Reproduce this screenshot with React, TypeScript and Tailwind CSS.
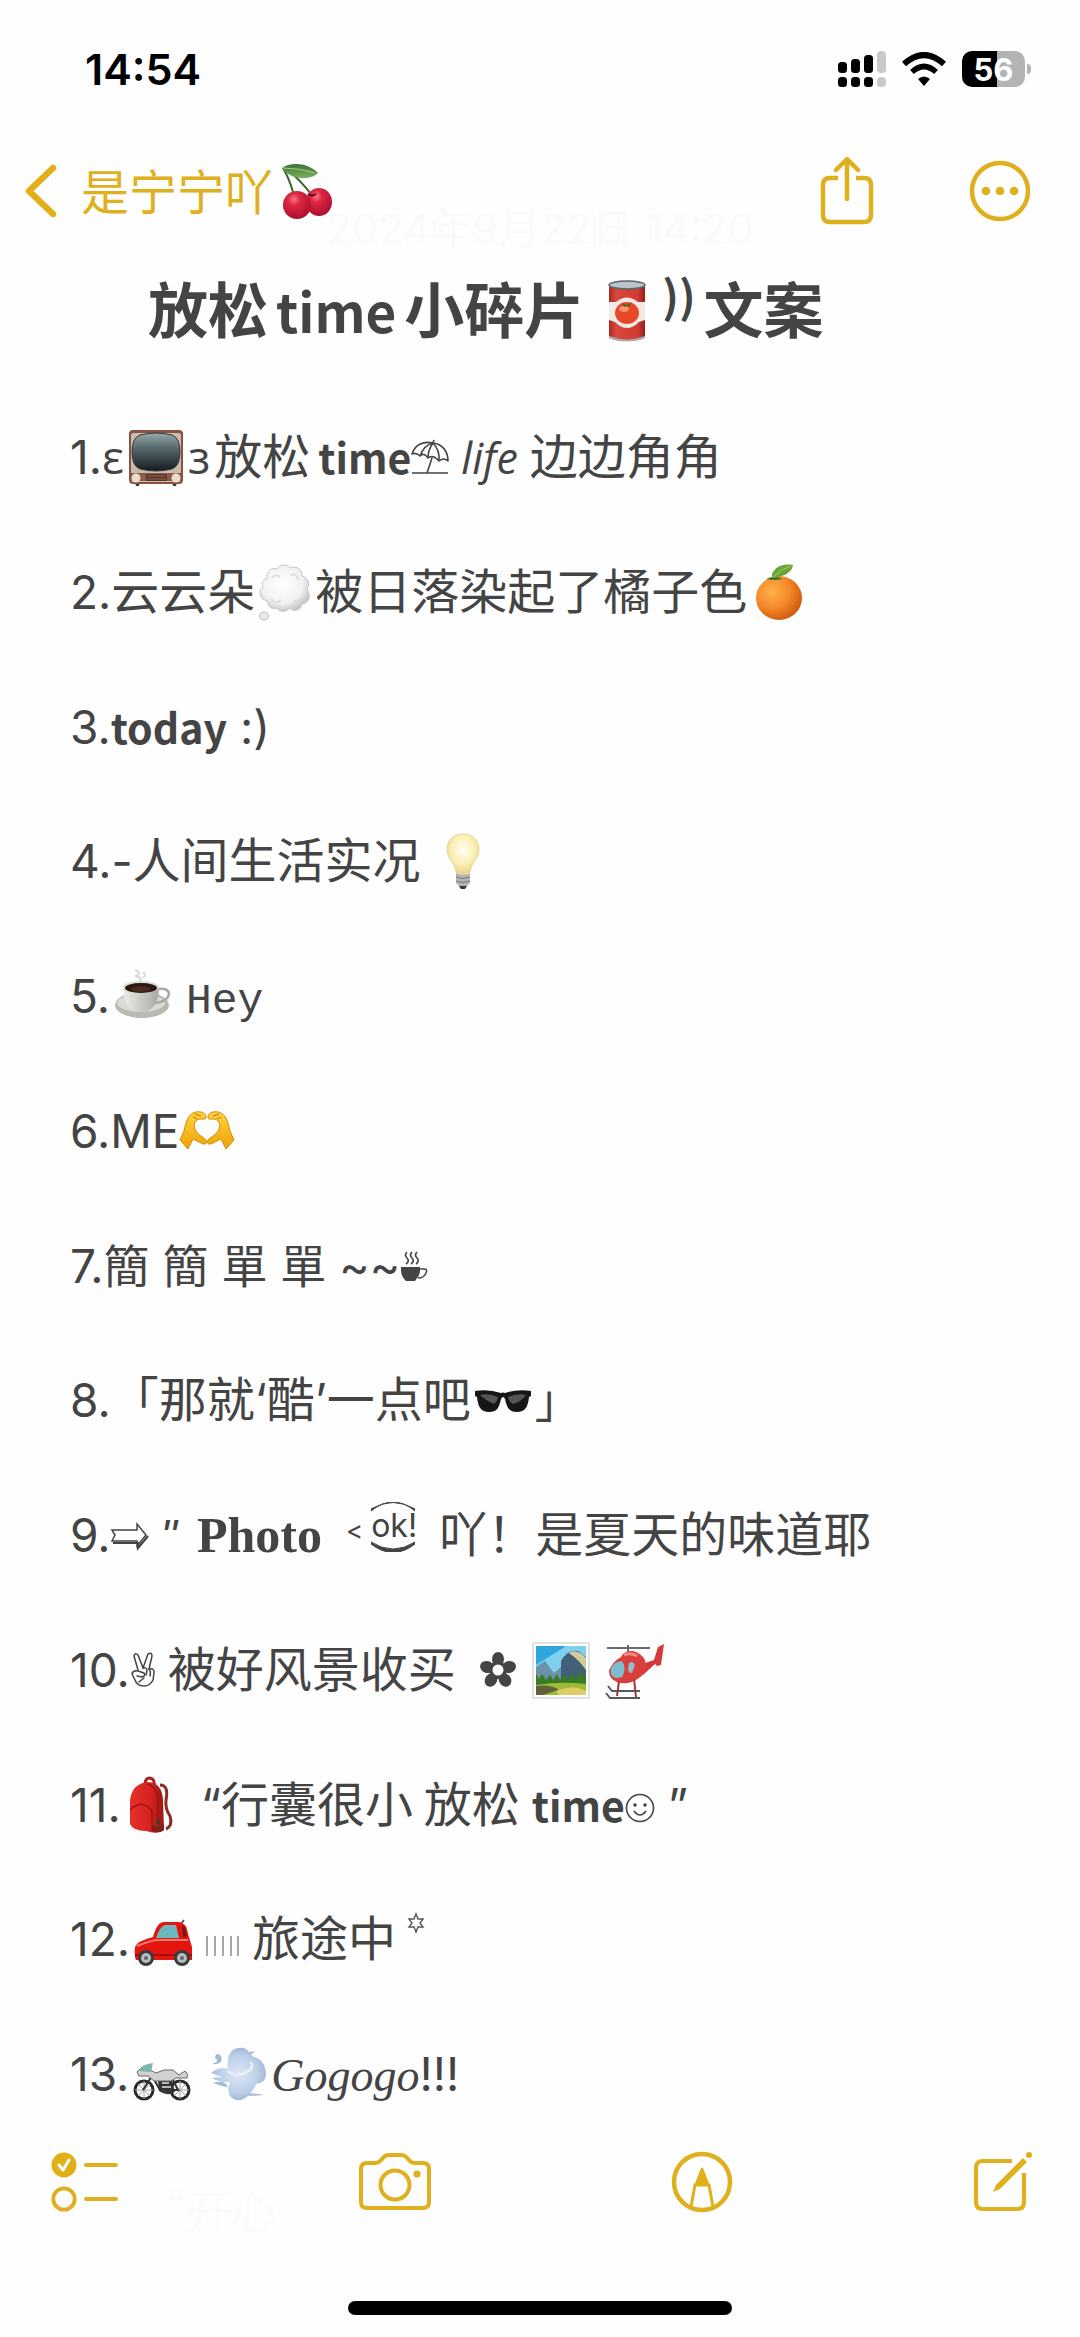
import type { ReactNode } from "react";

/* ---------- Drawing helper ---------- */

type DrawProps = { w: number; label: string; className?: string; children: ReactNode };

// Every inline drawing shares one 56px tall box that hangs 12px under the baseline
function Draw({ w, label, className = "", children }: DrawProps) {
  return (
    <svg
      role="img"
      aria-label={label}
      width={w}
      height="56"
      viewBox={`0 0 ${w} 56`}
      fill="none"
      className={`inline-block overflow-visible align-[-12px] ${className}`}
    >
      {children}
    </svg>
  );
}

/* ---------- Emoji ---------- */

function Cherries() {
  return (
    <svg role="img" aria-label="cherries" width="52" height="56" viewBox="0 0 52 56" fill="none">
      <defs>
        <radialGradient id="cherry" cx="0.4" cy="0.3" r="0.75">
          <stop offset="0" stopColor="#f8788a" />
          <stop offset="0.3" stopColor="#dc2741" />
          <stop offset="1" stopColor="#a80d2c" />
        </radialGradient>
        <linearGradient id="leaf" x1="0" y1="0" x2="0" y2="1">
          <stop offset="0" stopColor="#3d7034" />
          <stop offset="1" stopColor="#79b25e" />
        </linearGradient>
      </defs>
      <path d="M2 5Q8 15 12 29M8 8Q20 18 30 31" stroke="#42632c" strokeWidth="2" />
      <path d="M1 5C9-1 27-1 37 10C29 18 9 17 1 5Z" fill="url(#leaf)" />
      <path d="M2 5Q18 5 34 10" stroke="#a6cd8b" strokeWidth="1" />
      <ellipse cx="38" cy="39" rx="13" ry="14" fill="url(#cherry)" />
      <ellipse cx="16" cy="42" rx="14" ry="14" fill="url(#cherry)" />
      <path d="M27 31Q31 34 35 31" stroke="#5d0717" strokeWidth="2" />
    </svg>
  );
}

function TomatoCan() {
  return (
    <svg
      role="img"
      aria-label="canned food"
      width="38"
      height="62"
      viewBox="0 0 38 62"
      fill="none"
      className="ml-6 mr-4 inline-block align-[-9px]"
    >
      <defs>
        <linearGradient id="can">
          <stop offset="0" stopColor="#a92a23" />
          <stop offset="0.2" stopColor="#d9483d" />
          <stop offset="0.8" stopColor="#d03a30" />
          <stop offset="1" stopColor="#962019" />
        </linearGradient>
      </defs>
      <path d="M1 5V56Q2 61 19 61Q36 61 37 56V5Z" fill="url(#can)" />
      <path d="M1 22L8 22Q19 13 30 22L37 22V40L31 42Q19 54 7 42L1 40Z" fill="#f0e9e4" />
      <ellipse cx="19" cy="33" rx="12" ry="11" fill="#e8482a" />
      <ellipse cx="16" cy="29" rx="5" ry="3" fill="#ff9270" />
      <path d="M14 23l5 2 5-3-3 5-2-1-3 1Z" fill="#486a20" />
      <path d="M1 57Q19 64 37 57" stroke="#a9adb0" strokeWidth="2" />
      <ellipse cx="19" cy="5" rx="18" ry="4" fill="#b7c6cd" stroke="#5b6669" strokeWidth="1.5" />
    </svg>
  );
}

function Television() {
  return (
    <Draw w={56} label="television" className="mx-1">
      <defs>
        <linearGradient id="tv" x1="0" y1="0" x2="0" y2="1">
          <stop offset="0" stopColor="#93aaab" />
          <stop offset="0.4" stopColor="#57696b" />
          <stop offset="1" stopColor="#171c1f" />
        </linearGradient>
      </defs>
      <path d="M7 52h5l-1 4H8ZM44 52h5l-1 4h-3Z" fill="#50352a" />
      <rect x="1" y="0" width="54" height="54" rx="4" fill="#8a5241" />
      <rect x="3" y="3" width="50" height="49" rx="2" fill="#c9bcab" />
      <path d="M3 43H53V51H3Z" fill="#8d5a49" />
      <path d="M12 5Q28 1 44 5Q52 8 52 22Q52 36 44 39Q28 43 12 39Q4 36 4 22Q4 8 12 5Z" fill="url(#tv)" stroke="#30393b" strokeWidth="1" />
      <rect x="18" y="44" width="21" height="7" rx="1" fill="#5a352a" />
      <path d="M19 46h19M19 49h19" stroke="#946754" strokeWidth="1" />
      <circle cx="8" cy="48" r="4.5" fill="#e9decb" />
      <circle cx="48" cy="48" r="4.5" fill="#e9decb" />
    </Draw>
  );
}

function ThoughtCloud() {
  return (
    <Draw w={52} label="thought" className="mx-1">
      <defs>
        <radialGradient id="cloud" cx="0.45" cy="0.4" r="0.6">
          <stop offset="0" stopColor="#ffffff" />
          <stop offset="0.7" stopColor="#f1f1f2" />
          <stop offset="1" stopColor="#c9c9cc" />
        </radialGradient>
      </defs>
      <path
        d="M8 14C7 6 13 2 18 4C21-1 29-1 31 3C38 0 44 5 43 11C50 13 51 20 48 24C53 31 49 39 43 39C42 46 34 47 31 43C26 48 20 47 18 43C11 45 8 40 9 36C0 35-1 25 4 22C2 18 4 14 8 14Z"
        fill="url(#cloud)"
        stroke="#c6c6c9"
        strokeWidth="1"
      />
      <path d="M13 13Q17 8 21 12M32 10Q38 8 39 15M12 34Q17 40 22 35M35 36Q42 37 43 30" stroke="#dededf" strokeWidth="2" />
      <ellipse cx="5" cy="51" rx="4.5" ry="4" fill="#e9e9ea" stroke="#bbbbbe" strokeWidth="1" />
    </Draw>
  );
}

function Tangerine() {
  return (
    <Draw w={48} label="tangerine" className="ml-2">
      <defs>
        <radialGradient id="orange" cx="0.35" cy="0.35" r="0.75">
          <stop offset="0" stopColor="#ffb14a" />
          <stop offset="0.5" stopColor="#f5892a" />
          <stop offset="1" stopColor="#c95207" />
        </radialGradient>
      </defs>
      <ellipse cx="24" cy="33" rx="23" ry="22" fill="url(#orange)" />
      <path d="M11 14l6-2 1-6 4 6 6 2-8 1Z" fill="#3e6d22" />
      <path d="M17 13C17 3 26-2 38 0C37 8 28 12 17 13Z" fill="#6ba63a" />
      <path d="M18 12Q26 4 36 1" stroke="#a6cf69" strokeWidth="1" />
    </Draw>
  );
}

function Bulb() {
  return (
    <Draw w={34} label="light bulb" className="ml-3">
      <defs>
        <radialGradient id="bulb" cx="0.5" cy="0.4" r="0.6">
          <stop offset="0" stopColor="#fffef2" />
          <stop offset="0.6" stopColor="#fbf0b6" />
          <stop offset="1" stopColor="#e9d489" />
        </radialGradient>
      </defs>
      <path d="M17 0C7 0 1 7 1 15C1 25 9 28 10 38Q17 42 24 38C25 28 33 25 33 15C33 7 27 0 17 0Z" fill="url(#bulb)" stroke="#e6d796" strokeWidth="1" />
      <path d="M10 39Q17 42 24 39V49L20 53H14L10 49Z" fill="#b4b4b0" />
      <path d="M10 43Q17 46 24 43M10 47Q17 50 24 47" stroke="#77777a" strokeWidth="1" />
      <path d="M13 52h8l-2 3h-4Z" fill="#353535" />
    </Draw>
  );
}

function Coffee() {
  return (
    <Draw w={56} label="coffee" className="ml-1">
      <defs>
        <linearGradient id="cup">
          <stop offset="0" stopColor="#eeeee9" />
          <stop offset="1" stopColor="#a9a9a2" />
        </linearGradient>
      </defs>
      <path d="M21 1q8 3 1 6q8 3 3 5M29 3q4 3 0 6" stroke="#d9d9d9" strokeWidth="2" />
      <ellipse cx="28" cy="36" rx="27" ry="13" fill="#b9b9b2" />
      <ellipse cx="27" cy="34" rx="24" ry="9" fill="#dadad4" />
      <path d="M44 20q11-1 11 5q-1 7-13 9" stroke="#a9a9a6" strokeWidth="2.5" />
      <path d="M9 18C9 34 16 43 27 43C39 43 45 34 45 18Z" fill="url(#cup)" />
      <ellipse cx="27" cy="18" rx="18" ry="6" fill="#dedcd6" />
      <ellipse cx="27" cy="19" rx="16" ry="5" fill="#2c1712" />
      <ellipse cx="27" cy="20" rx="10" ry="3" fill="#4a2a20" />
    </Draw>
  );
}

function HeartHands() {
  return (
    <Draw w={56} label="heart hands">
      <defs>
        <linearGradient id="hand" x1="0" y1="0" x2="0" y2="1">
          <stop offset="0" stopColor="#ffd23c" />
          <stop offset="1" stopColor="#eda306" />
        </linearGradient>
      </defs>
      <g fill="url(#hand)" stroke="#d18c0a" strokeWidth="1" strokeLinejoin="round">
        <path d="M1 36L5 27C7 17 10 9 17 8C22 7 27 9 27 13C27 16 24 15 22 15C16 15 14 20 16 25C18 31 25 33 27 36C29 40 26 41 22 39L14 35L9 45Z" />
        <path d="M55 36L51 27C49 17 46 9 39 8C34 7 29 9 29 13C29 16 32 15 34 15C40 15 42 20 40 25C38 31 31 33 29 36C27 40 30 41 34 39L42 35L47 45Z" />
      </g>
      <path d="M16 10l6 2M14 13l4 2M40 10l-6 2M42 13l-4 2" stroke="#bd7804" strokeWidth="1" />
    </Draw>
  );
}

function Sunglasses() {
  return (
    <Draw w={56} label="sunglasses" className="mx-1">
      <path d="M0 18Q14 16 26 20Q28 19 30 20Q42 16 56 18V23L54 24C53 34 50 39 42 39C34 39 32 35 30 26Q28 22 26 26C24 35 22 39 14 39C6 39 3 34 2 24L0 23Z" fill="#161616" />
      <path d="M5 22Q14 20 23 24Q22 29 19 31Q10 27 5 22ZM33 24Q42 20 51 22Q46 29 38 31Q34 29 33 24Z" fill="#555" />
    </Draw>
  );
}

function Landscape() {
  return (
    <Draw w={58} label="national park" className="ml-4">
      <rect x="1" y="0" width="56" height="55" fill="#fff" stroke="#d3d9d9" strokeWidth="1.5" />
      <rect x="4" y="3" width="50" height="49" fill="#7fd0ef" />
      <path d="M4 3h30L4 22Z" fill="#2fa5de" />
      <path d="M4 24l9-6 9 12 8-7V40H4Z" fill="#6b93a8" />
      <path d="M29 42V18Q36 6 46 8L54 14V42Z" fill="#426178" />
      <path d="M37 10Q45 5 54 15V27Q47 17 37 10Z" fill="#d4cb9b" />
      <path d="M4 31l3 5 3-5 4 6 4-5 3 5 4-6 3 6 4-5 4 5 4-7 4 6 5-8 5 6v14H4Z" fill="#397a26" />
      <path d="M4 42Q30 38 54 41V52H4Z" fill="#9dba37" />
      <path d="M4 43Q19 41 27 47Q16 50 11 52H4Z" fill="#62603b" />
      <path d="M24 48Q42 41 54 48V52H27Z" fill="#dfcc67" />
    </Draw>
  );
}

function Helicopter() {
  return (
    <Draw w={58} label="helicopter" className="ml-4">
      <path d="M33 22L48 17L52 4L58 1L55 22L51 23L49 21L37 32Z" fill="#d33b38" />
      <path d="M1 5h43M22 2v8" stroke="#656b6e" strokeWidth="2" />
      <path d="M15 14Q18 7 27 8Q35 10 39 17Q42 29 33 35Q22 43 11 39Q3 36 3 28Q6 19 15 14Z" fill="#d93f3d" />
      <path d="M18 12Q24 9 31 13" stroke="#f28b83" strokeWidth="3" />
      <path d="M5 25Q9 18 16 18Q21 25 16 34Q8 37 5 31Z" fill="#7ebdce" />
      <path d="M23 20q4-3 6 2l-3 8q-6 0-3-10Z" fill="#91bccb" />
      <path d="M13 38l-2 15M28 36l2 18" stroke="#b52f31" strokeWidth="2" />
      <path d="M2 43l4 5h28M0 50l4 5h30" stroke="#545b60" strokeWidth="2" />
    </Draw>
  );
}

function Backpack() {
  return (
    <Draw w={44} label="backpack" className="ml-2">
      <defs>
        <linearGradient id="bag">
          <stop offset="0" stopColor="#e6302c" />
          <stop offset="0.6" stopColor="#d6231f" />
          <stop offset="1" stopColor="#971712" />
        </linearGradient>
      </defs>
      <path d="M31 7Q40 7 37 22Q36 31 41 38Q44 48 37 51" stroke="#8e2b21" strokeWidth="3" />
      <path d="M16 6Q16 0 21 0Q26 1 25 7" stroke="#a9221c" strokeWidth="3" />
      <path d="M1 22Q3 6 18 4Q33 4 34 22L35 52Q29 57 17 53Q4 53 1 46Z" fill="url(#bag)" />
      <path d="M1 32Q13 20 23 33V53M19 6Q30 10 29 27V44" stroke="#9f1512" strokeWidth="1.5" />
      <path d="M23 47q7 4 12-1v6q-5 4-12 1Z" fill="#7d2219" />
      <path d="M29 41v6" stroke="#4a3a2c" strokeWidth="3" />
    </Draw>
  );
}

function Car() {
  return (
    <Draw w={60} label="car" className="ml-1">
      <path d="M47 12l3-4" stroke="#444" strokeWidth="1.5" />
      <path d="M19 25Q23 10 30 10H45Q53 11 54 22L58 35V48H2Q0 44 1 35Q3 29 19 25Z" fill="#e3150f" />
      <path d="M22 26Q26 14 31 13H42L45 26Z" fill="#6db8bd" />
      <path d="M48 13Q52 15 53 25H49Z" fill="#821512" />
      <path d="M3 34Q18 28 24 28H54" stroke="#ff7b6e" strokeWidth="2" />
      <path d="M1 43H58" stroke="#a60b08" strokeWidth="2" />
      <circle cx="12" cy="46" r="8" fill="#3b3b3b" />
      <circle cx="48" cy="46" r="8" fill="#3b3b3b" />
      <circle cx="12" cy="46" r="5" fill="#b4bcc0" />
      <circle cx="48" cy="46" r="5" fill="#b4bcc0" />
      <circle cx="12" cy="46" r="2" fill="#666" />
      <circle cx="48" cy="46" r="2" fill="#666" />
    </Draw>
  );
}

function Motorcycle() {
  return (
    <Draw w={58} label="motorcycle" className="ml-1">
      <circle cx="11" cy="43" r="9" stroke="#292929" strokeWidth="3" />
      <circle cx="47" cy="43" r="9" stroke="#292929" strokeWidth="3" />
      <path d="M11 34v18M2 43h18M5 37l12 12M17 37L5 49M47 34v18M38 43h18M41 37l12 12M53 37L41 49" stroke="#a2a2a2" strokeWidth="1" />
      <path d="M10 43l9-14 8 14h18l-7-14" stroke="#333" strokeWidth="2" />
      <path d="M25 33h14l3 12q-8 5-16-1Z" fill="#333" />
      <path d="M29 36h7M29 40h9" stroke="#b7b7b7" strokeWidth="2" />
      <path d="M4 25Q8 20 15 22L23 26L31 23H40L46 28L52 24Q56 27 54 31H43L38 34H21L15 29H6Z" fill="#d2d3d0" stroke="#666" strokeWidth="1" />
      <path d="M5 24Q9 17 20 16L18 25Z" fill="#7eb5ac" />
    </Draw>
  );
}

function Dash() {
  return (
    <Draw w={56} label="dash" className="ml-5">
      <defs>
        <radialGradient id="dash" cx="0.5" cy="0.5" r="0.6">
          <stop offset="0" stopColor="#dce6f5" />
          <stop offset="0.6" stopColor="#bccfe8" />
          <stop offset="1" stopColor="#8fa9cb" />
        </radialGradient>
      </defs>
      <path d="M0 26Q9 19 17 22C15 8 21 1 28 1Q34 0 38 5L44 4L40 8L43 10Q54 13 55 27Q55 36 45 37Q43 43 39 46L53 48L37 49Q32 54 25 53C17 51 16 42 19 35Q9 36 1 31L11 30L0 26Z" fill="url(#dash)" />
      <path d="M1 17Q13 18 10 9Q5 4 4 11Q10 14 1 17ZM2 36Q13 32 17 40Q9 39 2 36Z" fill="#9fb9da" />
      <path d="M17 24Q26 32 37 24Q43 22 40 15" stroke="#e7eef8" strokeWidth="3" />
    </Draw>
  );
}

/* ---------- Monochrome symbols ---------- */

function BeachUmbrella() {
  return (
    <Draw w={38} label="umbrella on ground">
      <g stroke="#444" strokeWidth="1.6" strokeLinejoin="round">
        <path d="M1 24C4 14 13 11 22 13C31 14 37 21 37 31Q33 27 28 31Q22 24 17 28Q13 22 9 26Q5 22 1 24Z" />
        <path d="M9 26Q13 15 22 13Q17 20 17 28M22 13Q29 20 28 31M22 13l1-3" />
        <path d="M21 28L16 43M1 43h36" />
      </g>
    </Draw>
  );
}

function HotBeverage() {
  return (
    <Draw w={28} label="hot beverage">
      <path d="M1 28H20V31C20 37 17 39 15 42H6C3 39 1 36 1 31Z" fill="#444" />
      <path d="M20 30h4q4 0 2 4q-2 5-8 5" stroke="#444" strokeWidth="1.5" />
      <path d="M7 13q-3 3 0 6t-1 6M12 13q-3 3 0 6t-1 6M17 13q-3 3 0 6t-1 6" stroke="#444" strokeWidth="1.6" />
    </Draw>
  );
}

function BlockArrow() {
  return (
    <Draw w={38} label="arrow">
      <path d="M1 22H26V16L35 27L26 38V33H1L4 27Z" stroke="#444" strokeWidth="1.5" />
      <path d="M2 35H27V40L37 28" stroke="#444" strokeWidth="2.2" />
    </Draw>
  );
}

function OkFace() {
  return (
    <span className="relative ml-2 inline-block w-11 text-center text-[32px] leading-none align-[15px]">
      ok!
      <svg aria-hidden="true" width="44" height="50" viewBox="0 0 44 50" fill="none" className="absolute -top-2 left-0">
        <path d="M0 9Q22-9 44 9V7Q22-6 0 7ZM0 40Q22 54 44 40V42Q22 59 0 42Z" fill="#444" stroke="#444" strokeWidth="1" />
      </svg>
    </span>
  );
}

function VictoryHand() {
  return (
    <Draw w={26} label="victory hand">
      <g stroke="#444" strokeWidth="1.5" strokeLinejoin="round" strokeLinecap="round">
        <path d="M8 27L4 13Q5 9 8 12L13 25L18 11Q22 9 22 13L19 26" />
        <path d="M19 26Q25 25 24 30L23 37Q20 43 14 43Q7 43 5 37L2 31Q3 27 8 28L14 30Q16 33 12 34L7 33" />
        <path d="M13 25Q17 24 17 28L16 32M19 26Q21 28 20 33M9 39l5-4" />
      </g>
    </Draw>
  );
}

function Florette() {
  return (
    <Draw w={36} label="florette" className="ml-6">
      <g fill="#444">
        <ellipse cx="18" cy="16" rx="6" ry="7" />
        <ellipse cx="29" cy="24" rx="7" ry="6" transform="rotate(-18 29 24)" />
        <ellipse cx="25" cy="37" rx="6" ry="7" transform="rotate(-36 25 37)" />
        <ellipse cx="11" cy="37" rx="6" ry="7" transform="rotate(36 11 37)" />
        <ellipse cx="7" cy="24" rx="7" ry="6" transform="rotate(18 7 24)" />
        <circle cx="18" cy="27" r="9" />
      </g>
      <circle cx="18" cy="27" r="5.5" fill="#fefefe" />
    </Draw>
  );
}

function Smiley() {
  return (
    <Draw w={30} label="smile">
      <circle cx="15" cy="30" r="13.5" stroke="#444" strokeWidth="1.6" />
      <path d="M9 33Q15 41 21 33" stroke="#444" strokeWidth="1.6" />
      <circle cx="10" cy="27" r="1.8" fill="#444" />
      <circle cx="20" cy="27" r="1.8" fill="#444" />
    </Draw>
  );
}

function ThinBars() {
  return (
    <Draw w={34} label="bars" className="mx-3">
      <path d="M1 24V44M9 24V44M17 24V44M25 24V44M32 24V44" stroke="#777" strokeWidth="1.3" />
    </Draw>
  );
}

function SmallStar() {
  return (
    <Draw w={16} label="star" className="ml-3">
      <path d="M8 2L10 7H15L12 11L15 15H10L8 20L6 15H1L4 11L1 7H6Z" stroke="#555" strokeWidth="1.4" />
    </Draw>
  );
}

/* ---------- Status bar ---------- */

function StatusBar() {
  return (
    <div className="flex h-[138px] items-center justify-between pl-[85px] pr-[49px]">
      <time className="font-[Inter] text-[43px] font-semibold leading-none text-black">14:54</time>
      <div className="flex items-center gap-4">
        <svg role="img" aria-label="signal" width="48" height="36" viewBox="0 0 48 36">
          <g fill="#000">
            <rect x="0" y="11" width="9" height="11" rx="3.5" />
            <rect x="13" y="8" width="9" height="14" rx="3.5" />
            <rect x="26" y="4" width="9" height="18" rx="3.5" />
            <rect x="0" y="26" width="9" height="10" rx="3.5" />
            <rect x="13" y="26" width="9" height="10" rx="3.5" />
            <rect x="26" y="26" width="9" height="10" rx="3.5" />
          </g>
          <rect x="39" y="0" width="9" height="22" rx="4" fill="#c9c9c9" />
          <rect x="39" y="26" width="9" height="10" rx="4" fill="#c9c9c9" />
        </svg>
        <svg role="img" aria-label="wifi" width="44" height="34" viewBox="0 0 44 34" fill="none">
          <path d="M2 12Q22-6 42 12" stroke="#000" strokeWidth="6" />
          <path d="M10 20Q22 9 34 20" stroke="#000" strokeWidth="5.5" />
          <path d="M16 27Q22 22 28 27L22 34Z" fill="#000" />
        </svg>
        <div className="flex items-center gap-[2px]">
          <div className="flex h-[36px] w-[63px] items-center justify-center rounded-[10px] bg-linear-to-r from-black from-56% to-[#b3b3b3] to-56% font-[Inter] text-[31px] font-bold leading-none text-white">
            56
          </div>
          <div className="h-[10px] w-[4px] rounded-r-full bg-[#b3b3b3]" />
        </div>
      </div>
    </div>
  );
}

/* ---------- Navigation ---------- */

function NavBar() {
  return (
    <nav className="flex h-[106px] items-center justify-between pl-[25px] pr-[49px] text-[#dfb01e]">
      <button className="flex items-center" aria-label="是宁宁吖">
        <svg width="32" height="54" viewBox="0 0 32 54" fill="none">
          <path d="M28 4L4 27L28 50" stroke="#e1b016" strokeWidth="6.5" strokeLinecap="round" strokeLinejoin="round" />
        </svg>
        <span className="ml-6 mr-2 pb-1 font-['Noto_Sans_CJK_SC',sans-serif] text-[48px] leading-[52px]">是宁宁吖</span>
        <Cherries />
      </button>
      <div className="flex items-center gap-[95px]">
        <button aria-label="Share">
          <svg width="54" height="68" viewBox="0 0 54 68" fill="none" stroke="currentColor" strokeWidth="4.5">
            <path d="M18 21H10Q3 21 3 28V58Q3 65 10 65H44Q51 65 51 58V28Q51 21 44 21H36" />
            <path d="M27 42V3M16 13L27 2L38 13" strokeLinecap="round" strokeLinejoin="round" />
          </svg>
        </button>
        <button aria-label="More">
          <svg width="62" height="62" viewBox="0 0 62 62" fill="none">
            <circle cx="31" cy="31" r="28" stroke="currentColor" strokeWidth="4.5" />
            <g fill="currentColor">
              <circle cx="17" cy="31" r="4.3" />
              <circle cx="31" cy="31" r="4.3" />
              <circle cx="45" cy="31" r="4.3" />
            </g>
          </svg>
        </button>
      </div>
    </nav>
  );
}

/* ---------- Note ---------- */

const boldSans = "font-['Noto_Sans_CJK_SC',sans-serif] text-[41px] font-bold leading-none";

function Han({ children, className = "" }: { children: ReactNode; className?: string }) {
  return (
    <span className={`font-['Noto_Sans_CJK_SC',sans-serif] text-[48px] leading-none ${className}`}>{children}</span>
  );
}

const notes: ReactNode[] = [
  <>
    1.<span className="font-['Open_Sans',sans-serif] leading-none">ε</span>
    <Television />
    <span className="font-['Open_Sans',sans-serif] leading-none">з</span>
    <Han className="ml-1">放松</Han>
    <span className={`ml-2 ${boldSans}`}>time</span>
    <BeachUmbrella />
    <i className="ml-3 font-['Open_Sans',sans-serif] text-[43px] leading-none">life</i>
    <Han className="ml-3">边边角角</Han>
  </>,
  <>
    2.<Han>云云朵</Han>
    <ThoughtCloud />
    <Han>被日落染起了橘子色</Han>
    <Tangerine />
  </>,
  <>
    3.<span className={boldSans}>today</span> :)
  </>,
  <>
    4.-<Han>人间生活实况</Han> <Bulb />
  </>,
  <>
    5.
    <Coffee />
    <span className="ml-4 font-['Liberation_Mono',monospace] text-[43px] leading-none">Hey</span>
  </>,
  <>
    6.ME
    <HeartHands />
  </>,
  <>
    7.簡 簡 單 單 ~~
    <HotBeverage />
  </>,
  <>
    8.<Han>「那就</Han>‘<Han>酷</Han>’<Han>一点吧</Han>
    <Sunglasses />」
  </>,
  <>
    9.
    <BlockArrow />
    <i className="ml-3 font-['Open_Sans',sans-serif] leading-none">ʺ</i>
    <b className="ml-5 font-['Liberation_Serif',serif] text-[50px] leading-none">Photo</b>
    <span className="ml-6 align-[12px] text-[26px] leading-none">&lt;</span>
    <OkFace />
    <Han className="ml-6">吖！是夏天的味道耶</Han>
  </>,
  <>
    10.
    <VictoryHand />
    <Han className="ml-3">被好风景收买</Han>
    <Florette />
    <Landscape />
    <Helicopter />
  </>,
  <>
    11.
    <Backpack />
    <span className="ml-7">“</span>
    <Han>行囊很小 放松</Han>
    <span className={`ml-3 ${boldSans}`}>time</span>
    <Smiley /> ”
  </>,
  <>
    12.
    <Car />
    <ThinBars />
    <Han>旅途中</Han>
    <SmallStar />
  </>,
  <>
    13.
    <Motorcycle />
    <Dash />
    <i className="ml-1 font-['Liberation_Serif',serif] leading-none">Gogogo</i>!!!
  </>,
];

function Note() {
  return (
    <main className="flex flex-1 flex-col font-[Inter,'Noto_Sans_CJK_SC',sans-serif] text-[#444]">
      <p className="-mt-[43px] h-[56px] text-center text-[42px] leading-[56px] text-[#fafafa]">2024年9月22日 14:20</p>
      <h1 className="pl-[148px] pt-[4px] font-['Noto_Sans_CJK_SC',sans-serif] text-[60px] font-bold leading-[92px]">
        放松<span className="mx-2 text-[53px] leading-none">time</span>小碎片
        <TomatoCan />
        <span className="mr-2 align-[20px] text-[44px] leading-none">))</span>文案
      </h1>
      <ol className="flex flex-1 flex-col justify-between pb-3 pl-[70px] pt-[72px] text-[46px]">
        {notes.map((note, i) => (
          <li key={i} className="h-[64px] whitespace-nowrap leading-[64px]">
            {note}
          </li>
        ))}
      </ol>
    </main>
  );
}

/* ---------- Bottom toolbar ---------- */

function Toolbar() {
  return (
    <footer className="relative h-[219px] text-[#dfb01e]">
      <span aria-hidden="true" className="absolute left-[140px] top-[56px] font-['Noto_Sans_CJK_SC',sans-serif] text-[46px] text-[#fbfbfb]">
        “开心
      </span>
      <div className="relative flex items-center justify-between pl-[51px] pr-[48px] pt-[33px]">
        <button aria-label="Checklist">
          <svg width="68" height="62" viewBox="0 0 68 62" fill="none">
            <circle cx="13" cy="14" r="12.5" fill="#e1b016" />
            <path d="M8 14l4 5 6-10" stroke="#fff" strokeWidth="3" strokeLinecap="round" strokeLinejoin="round" />
            <circle cx="13" cy="48" r="10.7" stroke="currentColor" strokeWidth="3.8" />
            <path d="M35 14H65M35 48H65" stroke="currentColor" strokeWidth="4" strokeLinecap="round" />
          </svg>
        </button>
        <button aria-label="Camera">
          <svg width="74" height="60" viewBox="0 0 74 60" fill="none">
            <path
              d="M9 11H17Q21 11 23 8L25 6Q27 3 31 3H43Q47 3 49 6L51 8Q53 11 57 11H65Q71 11 71 17V50Q71 56 65 56H9Q3 56 3 50V17Q3 11 9 11Z"
              stroke="currentColor"
              strokeWidth="4"
            />
            <circle cx="37" cy="33" r="14.5" stroke="currentColor" strokeWidth="4" />
            <circle cx="59" cy="22" r="3.6" fill="currentColor" />
          </svg>
        </button>
        <button aria-label="Markup">
          <svg width="62" height="62" viewBox="0 0 62 62" fill="none">
            <circle cx="31" cy="31" r="28" stroke="currentColor" strokeWidth="4.5" />
            <path d="M20 56L24 34H38L42 56" stroke="currentColor" strokeWidth="3" />
            <path d="M30 17Q31 16 32 17L39 35H23Z" fill="#e1b016" />
          </svg>
        </button>
        <button aria-label="New note">
          <svg width="60" height="62" viewBox="0 0 60 62" fill="none">
            <path d="M40 10H11Q4 10 4 17V51Q4 58 11 58H45Q52 58 52 51V22" stroke="currentColor" strokeWidth="4.2" />
            <path d="M51 7L55 11L28 38L21 41L24 34Z" fill="currentColor" />
            <circle cx="57" cy="4" r="3" fill="currentColor" />
          </svg>
        </button>
      </div>
      <div className="absolute inset-x-0 bottom-[22px] mx-auto h-[14px] w-[384px] rounded-full bg-black" />
    </footer>
  );
}

export default function App() {
  return (
    <div className="flex min-h-screen flex-col bg-[#fefefe]">
      <header>
        <StatusBar />
        <NavBar />
      </header>
      <Note />
      <Toolbar />
    </div>
  );
}
